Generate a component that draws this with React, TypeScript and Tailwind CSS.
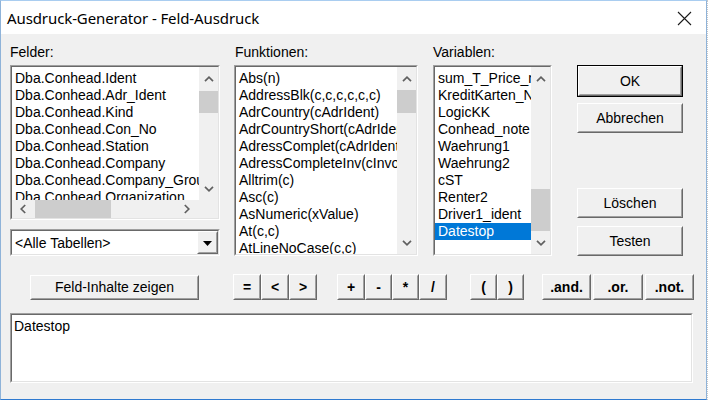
import React from "react";

const F = "font-['Liberation_Sans',Arial,sans-serif]";

function Raised({
  children,
  className = "",
  def = false,
}: {
  children?: React.ReactNode;
  className?: string;
  def?: boolean;
}) {
  return (
    <div className={`flex ${def ? "border border-black" : ""} ${className}`}>
      <div className="flex-1 flex border border-t-white border-l-white border-r-[#696969] border-b-[#696969]">
        <div className="flex-1 flex items-center justify-center bg-[#f0f0f0] border border-t-[#f0f0f0] border-l-[#f0f0f0] border-r-[#a0a0a0] border-b-[#a0a0a0]">
          {children}
        </div>
      </div>
    </div>
  );
}

function Sunken({ children, className = "" }: { children?: React.ReactNode; className?: string }) {
  return (
    <div className={`flex border border-t-[#a0a0a0] border-l-[#a0a0a0] border-r-white border-b-white ${className}`}>
      <div className="flex-1 flex min-w-0 min-h-0 bg-white border border-t-[#696969] border-l-[#696969] border-r-[#e3e3e3] border-b-[#e3e3e3]">
        {children}
      </div>
    </div>
  );
}

const Up = () => (
  <svg width="10" height="6" viewBox="0 0 10 6">
    <path d="M1 5.2 L5 1.2 L9 5.2" fill="none" stroke="#606060" strokeWidth="1.7" />
  </svg>
);
const Down = () => (
  <svg width="10" height="6" viewBox="0 0 10 6">
    <path d="M1 0.8 L5 4.8 L9 0.8" fill="none" stroke="#606060" strokeWidth="1.7" />
  </svg>
);
const Left = () => (
  <svg width="6" height="10" viewBox="0 0 6 10">
    <path d="M5.2 1 L1.2 5 L5.2 9" fill="none" stroke="#606060" strokeWidth="1.7" />
  </svg>
);
const Right = () => (
  <svg width="6" height="10" viewBox="0 0 6 10">
    <path d="M0.8 1 L4.8 5 L0.8 9" fill="none" stroke="#606060" strokeWidth="1.7" />
  </svg>
);

function VScroll({ thumbTop, thumbH }: { thumbTop: number; thumbH: number }) {
  return (
    <div className="w-[19px] shrink-0 flex flex-col bg-[#f0f0f0]">
      <div className="h-[23px] flex items-center justify-center">
        <Up />
      </div>
      <div className="flex-1 flex flex-col">
        <div className="bg-[#cdcdcd] w-full" style={{ marginTop: thumbTop, height: thumbH }} />
      </div>
      <div className="h-[23px] flex items-center justify-center">
        <Down />
      </div>
    </div>
  );
}

function ListRows({ items, selected }: { items: string[]; selected?: string }) {
  return (
    <div className="flex-1 min-w-0 overflow-hidden pt-[3px]">
      {items.map((it) => (
        <div
          key={it}
          className={`h-[17px] leading-[17px] pl-[3px] whitespace-nowrap text-[14px] ${
            it === selected ? "bg-[#0078d7] text-white" : "text-black"
          }`}
        >
          {it}
        </div>
      ))}
    </div>
  );
}

const felder = [
  "Dba.Conhead.Ident",
  "Dba.Conhead.Adr_Ident",
  "Dba.Conhead.Kind",
  "Dba.Conhead.Con_No",
  "Dba.Conhead.Station",
  "Dba.Conhead.Company",
  "Dba.Conhead.Company_Group",
  "Dba.Conhead.Organization",
];

const funktionen = [
  "Abs(n)",
  "AddressBlk(c,c,c,c,c,c)",
  "AdrCountry(cAdrIdent)",
  "AdrCountryShort(cAdrIdent)",
  "AdressComplet(cAdrIdent)",
  "AdressCompleteInv(cInvoice)",
  "Alltrim(c)",
  "Asc(c)",
  "AsNumeric(xValue)",
  "At(c,c)",
  "AtLineNoCase(c,c)",
];

const variablen = [
  "sum_T_Price_net",
  "KreditKarten_Nr",
  "LogicKK",
  "Conhead_note",
  "Waehrung1",
  "Waehrung2",
  "cST",
  "Renter2",
  "Driver1_ident",
  "Datestop",
];

function Op({ label, w }: { label: string; w: string }) {
  return (
    <Raised className={`${w} h-[26px]`}>
      <span className="text-[14px] font-bold text-black leading-none">{label}</span>
    </Raised>
  );
}

export default function App() {
  return (
    <div className={`w-[710px] h-[401px] bg-white flex items-start ${F}`}>
      <div className="w-[707px] h-[400px] flex flex-col border border-t-[#a9cdf0] border-l-[#8fb3d9] border-r-[#8fb3d9] border-b-[#2f7ad0] bg-[#f0f0f0]">
        {/* Title bar */}
        <div className="h-[33px] shrink-0 bg-white flex items-center justify-between pl-[6px] pr-[14px]">
          <span className="font-['Noto_Sans',sans-serif] text-[15px] text-black tracking-[-0.1px] pt-[2px]">
            Ausdruck-Generator - Feld-Ausdruck
          </span>
          <svg width="15" height="15" viewBox="0 0 15 15" className="mt-[1px]">
            <path d="M1 1 L14 14 M14 1 L1 14" stroke="#1a1a1a" strokeWidth="1.1" />
          </svg>
        </div>

        {/* Content */}
        <div className="flex-1 flex flex-col pl-[9px] pt-[10px]">
          {/* Row A */}
          <div className="flex items-start">
            {/* Felder */}
            <div className="w-[210px] flex flex-col">
              <div className="h-[21px] leading-[17px] text-[14px] text-black">Felder:</div>
              <Sunken className="h-[155px]">
                <div className="flex-1 flex flex-col min-w-0">
                  <div className="flex-1 flex min-h-0">
                    <ListRows items={felder} />
                    <VScroll thumbTop={1} thumbH={22} />
                  </div>
                  <div className="h-[18px] shrink-0 flex">
                    <div className="flex-1 flex bg-[#f0f0f0]">
                      <div className="w-[22px] flex items-center justify-center">
                        <Left />
                      </div>
                      <div className="w-[76px] ml-[1px] bg-[#cdcdcd]" />
                      <div className="flex-1" />
                      <div className="w-[24px] flex items-center justify-center">
                        <Right />
                      </div>
                    </div>
                    <div className="w-[19px] bg-[#f0f0f0]" />
                  </div>
                </div>
              </Sunken>
              <Sunken className="h-[27px] mt-[9px]">
                <div className="flex-1 flex items-center pl-[3px] pt-[2px] text-[14px] text-black whitespace-nowrap">
                  &lt;Alle Tabellen&gt;
                </div>
                <Raised className="w-[21px]">
                  <svg width="9" height="5" viewBox="0 0 9 5" className="mt-[2px]">
                    <polygon points="0,0 9,0 4.5,5" fill="#000" />
                  </svg>
                </Raised>
              </Sunken>
            </div>

            {/* Funktionen */}
            <div className="w-[184px] ml-[14px] flex flex-col">
              <div className="h-[21px] leading-[17px] text-[14px] text-black pl-[1px]">Funktionen:</div>
              <Sunken className="h-[191px]">
                <ListRows items={funktionen} />
                <VScroll thumbTop={0} thumbH={23} />
              </Sunken>
            </div>

            {/* Variablen */}
            <div className="w-[119px] ml-[15px] flex flex-col">
              <div className="h-[21px] leading-[17px] text-[14px] text-black">Variablen:</div>
              <Sunken className="h-[191px]">
                <ListRows items={variablen} selected="Datestop" />
                <VScroll thumbTop={99} thumbH={42} />
              </Sunken>
            </div>

            {/* Buttons */}
            <div className="w-[106px] ml-[25px] flex flex-col mt-[21px]">
              <Raised def className="h-[32px]">
                <span className="text-[14px] text-black">OK</span>
              </Raised>
              <Raised className="h-[30px] mt-[6px]">
                <span className="text-[14px] text-black">Abbrechen</span>
              </Raised>
              <Raised className="h-[30px] mt-[55px]">
                <span className="text-[14px] text-black">Löschen</span>
              </Raised>
              <Raised className="h-[30px] mt-[8px]">
                <span className="text-[14px] text-black">Testen</span>
              </Raised>
            </div>
          </div>

          {/* Row B */}
          <div className="flex items-start mt-[18px]">
            <Raised className="w-[169px] h-[25px] ml-[20px] mt-[1px]">
              <span className="text-[14px] text-black">Feld-Inhalte zeigen</span>
            </Raised>
            <div className="flex ml-[34px]">
              <Op label="=" w="w-[28px]" />
              <Op label="<" w="w-[28px]" />
              <Op label=">" w="w-[28px]" />
            </div>
            <div className="flex ml-[20px]">
              <Op label="+" w="w-[28px]" />
              <Op label="-" w="w-[27px]" />
              <Op label="*" w="w-[27px]" />
              <Op label="/" w="w-[28px]" />
            </div>
            <div className="flex ml-[23px]">
              <Op label="(" w="w-[27px]" />
              <Op label=")" w="w-[27px]" />
            </div>
            <div className="flex ml-[18px] gap-[2px]">
              <Op label=".and." w="w-[49px]" />
              <Op label=".or." w="w-[50px]" />
              <Op label=".not." w="w-[49px]" />
            </div>
          </div>

          {/* Expression */}
          <Sunken className="w-[683px] h-[70px] mt-[13px]">
            <div className="flex-1 pl-[2px] pt-[3px] text-[14px] leading-[17px] text-black">Datestop</div>
          </Sunken>
        </div>
      </div>
      <div className="w-[3px] h-[400px] border-l border-dotted border-l-[#c8c8c8]" />
    </div>
  );
}
